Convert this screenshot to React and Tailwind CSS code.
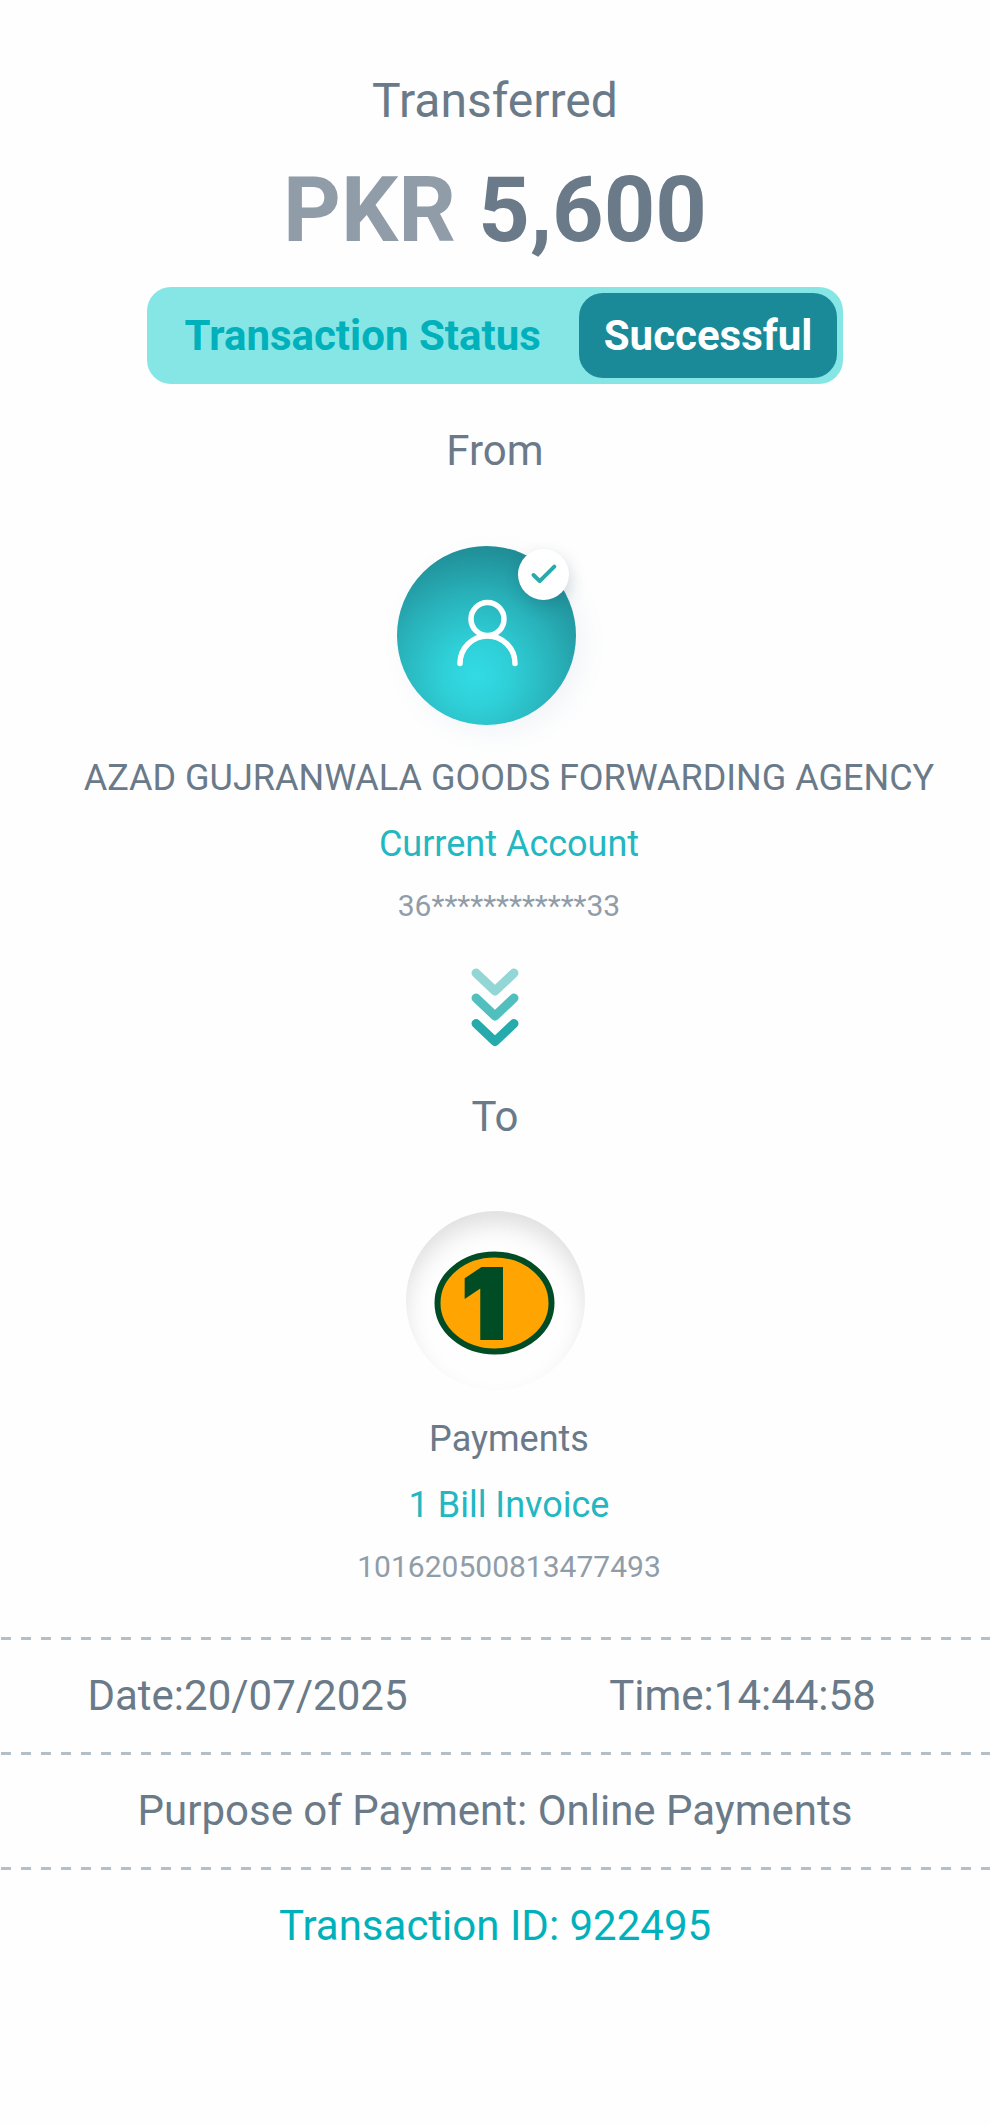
function Dashes() {
  return (
    <div
      aria-hidden="true"
      className="h-[3px] w-full bg-[repeating-linear-gradient(to_right,transparent_0_1px,#b4bfc8_1px_11px,transparent_11px_20px)]"
    />
  );
}

function PersonAvatar() {
  return (
    <div className="relative mr-[18px] size-[179px] rounded-full bg-[radial-gradient(circle_at_44%_72%,#32dbe4_0%,#2fd0d8_20%,#29b3bb_48%,#208e97_78%,#1e868f_100%)] shadow-[8px_8px_24px_rgba(90,130,180,0.08)]">
      <svg viewBox="0 0 179 179" className="size-full" fill="none" role="img" aria-label="Sender">
        <circle cx="90.5" cy="73" r="16.5" stroke="#fff" strokeWidth="5.5" />
        <path d="M63 117.500a27.500 27.500 0 0 1 55 0" stroke="#fff" strokeWidth="5.500" strokeLinecap="round" />
      </svg>
      <div className="absolute top-[3px] right-[7px] size-[51px] rounded-full bg-white shadow-[2px_6px_16px_rgba(20,60,80,0.18)]">
        <svg viewBox="0 0 51 51" className="size-full" fill="none" role="img" aria-label="Verified">
          <path d="M15.500 26l6.200 6.200L36.300 17.600" stroke="#28aaad" strokeWidth="4" strokeLinecap="round" strokeLinejoin="round" />
        </svg>
      </div>
    </div>
  );
}

function BillerLogo() {
  return (
    <div className="size-[179px] rounded-full bg-[#fefefe] shadow-[inset_0_14px_24px_-2px_rgba(0,0,0,0.13)]">
      <svg viewBox="0 0 179 179" className="size-full" role="img" aria-label="1 Bill">
        <ellipse cx="88.500" cy="92" rx="57" ry="48.500" fill="#ffa400" stroke="#004d25" strokeWidth="6" />
        <text x="78" y="127" textAnchor="middle" fontSize="95" fill="#004d25" stroke="#004d25" strokeWidth="4" className="font-[Inter,sans-serif] font-black">
          1
        </text>
      </svg>
    </div>
  );
}

function Chevrons() {
  return (
    <svg viewBox="0 0 48 79" className="h-[79px] w-12" fill="none" strokeWidth="9" strokeLinecap="round" strokeLinejoin="round" aria-hidden="true">
      <path d="M5 5L24 23 43 5" stroke="#93d6d6" />
      <path d="M5 30L24 48 43 30" stroke="#52bfbf" />
      <path d="M5 55.500L24 73.500 43 55.500" stroke="#25abac" />
    </svg>
  );
}

function Party({ name, kind, number }) {
  return (
    <div className="flex w-full flex-col items-center gap-[22px] pl-7 text-center">
      <p className="text-[36px] leading-[44px]">{name}</p>
      <p className="text-[36px] leading-[44px] text-[#22b7c1]">{kind}</p>
      <p className="text-[30px] leading-[36px] text-[#909da8]">{number}</p>
    </div>
  );
}

export default function App() {
  return (
    <main className="flex min-h-screen flex-col items-center bg-[#fefefe] pt-[73px] pb-12 font-[Roboto,sans-serif] text-[42px] leading-[48px] text-[#6a7a89]">
      <h1 className="text-[48px] leading-[56px]">Transferred</h1>
      <p className="mt-[30px] text-[90px] leading-[104px] font-bold">
        <span className="text-[#909da8]">PKR</span> 5,600
      </p>

      <div className="mt-6 flex items-center rounded-3xl bg-[#86e6e6] p-1.5 font-bold">
        <span className="pr-[38px] pl-8 text-[#00b1bb]">Transaction Status</span>
        <span className="flex h-[85px] items-center rounded-3xl bg-[#1a8a99] px-[25px] text-white">Successful</span>
      </div>

      <h2 className="mt-[43px] mb-[71px]">From</h2>
      <PersonAvatar />
      <div className="mt-[31px] mb-11 w-full">
        <Party name="AZAD GUJRANWALA GOODS FORWARDING AGENCY" kind="Current Account" number="36************33" />
      </div>

      <Chevrons />

      <h2 className="mt-[46px] mb-[70px]">To</h2>
      <BillerLogo />
      <div className="mt-[27px] mb-[52px] w-full">
        <Party name="Payments" kind="1 Bill Invoice" number="101620500813477493" />
      </div>

      <Dashes />
      <div className="grid w-full grid-cols-2 items-center py-8 text-center">
        <p>Date:20/07/2025</p>
        <p>Time:14:44:58</p>
      </div>
      <Dashes />
      <p className="py-8">Purpose of Payment: Online Payments</p>
      <Dashes />
      <p className="py-8 text-[#00b1bb]">Transaction ID: 922495</p>
    </main>
  );
}
